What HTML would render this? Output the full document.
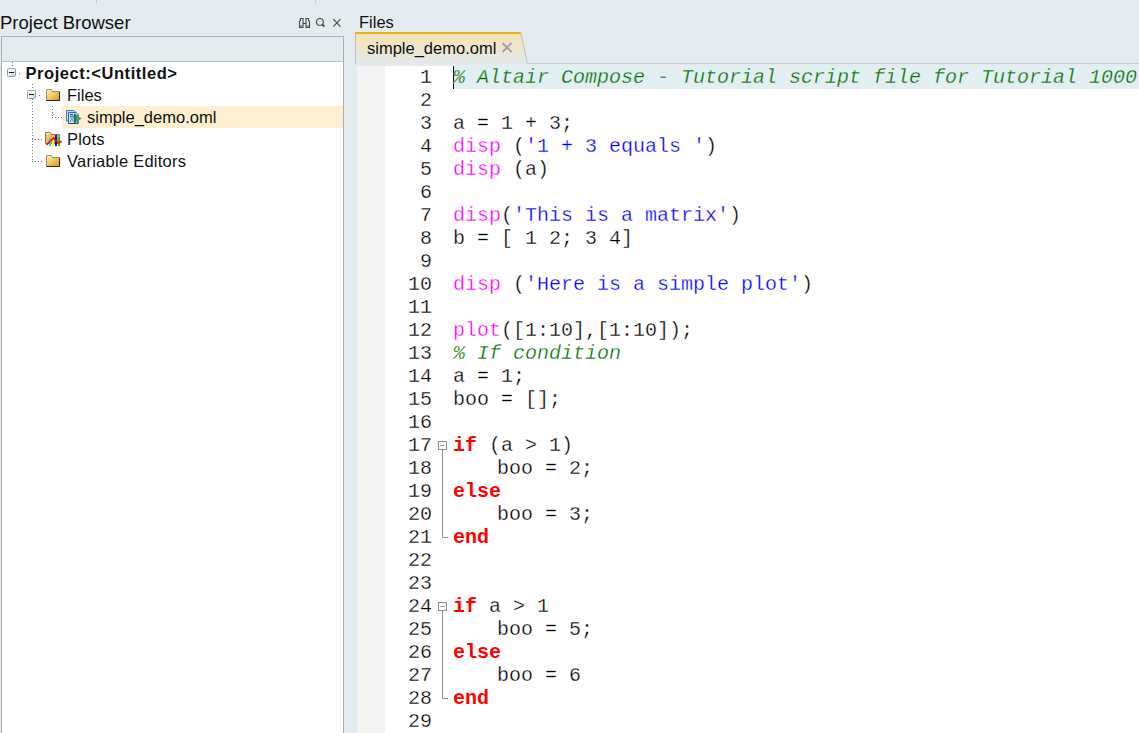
<!DOCTYPE html>
<html><head><meta charset="utf-8">
<style>
html,body{margin:0;padding:0;}
body{width:1139px;height:733px;overflow:hidden;position:relative;background:#e4ebee;font-family:"Liberation Sans",sans-serif;color:#000;}
.abs{position:absolute;}
.sep{position:absolute;top:0;width:1px;height:3px;background:#c4c9cd;}
#pbtitle{left:0;top:11px;font-size:18.5px;line-height:24px;color:#111;white-space:nowrap;}
#lp{left:1px;top:36px;width:341px;height:700px;border:1px solid #a9b0b5;background:#fff;}
#lphead{left:0;top:0;width:341px;height:24px;background:#e4ebee;border-bottom:1px solid #bcc2c6;}
.row{position:absolute;height:22px;line-height:22px;font-size:16.5px;white-space:nowrap;color:#111;}
#files{left:359px;top:10px;font-size:16.5px;line-height:24px;color:#111;}
#tab{left:355px;top:32px;width:174px;height:32px;}
#editor{left:357px;top:66px;width:782px;height:667px;background:#fff;}
#gutter{left:0;top:0;width:28px;height:667px;background:#f4f4f4;}
.code{position:absolute;left:0;top:0;font-family:"Liberation Mono",monospace;font-size:20px;line-height:23px;white-space:pre;color:#000;-webkit-text-stroke:0.3px #fff;}
.ln{position:absolute;left:0;width:75px;text-align:right;}
.cl{position:absolute;left:96px;}
.cm{color:#007000;font-style:italic;}
.kw{color:#ff00ff;}
.st{color:#0000ff;}
.rw{color:#ff0000;font-weight:bold;-webkit-text-stroke:0;}
</style></head>
<body>
<div class="sep" style="left:96px"></div>
<div class="sep" style="left:315px"></div>
<div id="pbtitle" class="abs">Project Browser</div>
<!-- header icons -->
<svg class="abs" style="left:298px;top:17px" width="46" height="12" viewBox="0 0 46 12">
  <g fill="none" stroke="#4a4a4a" stroke-width="1.1">
    <path d="M1.5 10.5V4.5l1-1V1.5h2.5v2.5l0 6.5z"/>
    <path d="M11.5 10.5V4.5l-1-1V1.5H8v2.5v6.5z"/>
    <path d="M5 6.5h3"/>
    <path d="M2 9h2.5M8.5 9H11" stroke-width="0.9"/>
    <circle cx="21.9" cy="4.9" r="3.4"/><path d="M24.3 7.4l2.2 2.2" stroke-width="1.8"/>
    <path d="M35.3 2.2l7.2 7.5M42.5 2.2l-7.2 7.5" stroke-width="1.2"/>
  </g>
</svg>
<div id="lp" class="abs">
  <div id="lphead" class="abs"></div>
</div>
<div id="tree">
<style>
.dv{position:absolute;width:1px;background:repeating-linear-gradient(to bottom,#767676 0,#767676 1px,transparent 1px,transparent 3px);}
.dh{position:absolute;height:1px;background:repeating-linear-gradient(to right,#767676 0,#767676 1px,transparent 1px,transparent 3px);}
.exp{position:absolute;width:7px;height:7px;border:1px solid #8c9db0;border-radius:1.5px;background:linear-gradient(135deg,#ffffff 0%,#eef2f8 50%,#c5d0de 100%);}
.exp:after{content:"";position:absolute;left:1px;top:3px;width:5px;height:1px;background:#111;}
</style>
<div class="abs" style="left:62px;top:106px;width:281px;height:22px;background:#fdefcf"></div>
<div class="dv" style="left:12px;top:62px;height:6px"></div>
<div class="dh" style="left:19px;top:73px;width:1px"></div>
<div class="dv" style="left:32px;top:84px;height:78px"></div>
<div class="dh" style="left:39px;top:95px;width:1px"></div>
<div class="dv" style="left:52px;top:106px;height:12px"></div>
<div class="dh" style="left:52px;top:117px;width:10px"></div>
<div class="dh" style="left:32px;top:139px;width:11px"></div>
<div class="dh" style="left:32px;top:161px;width:11px"></div>
<div class="exp" style="left:7px;top:68px"></div>
<div class="exp" style="left:27px;top:90px"></div>
<svg class="abs" style="left:45px;top:88px" width="16" height="14" viewBox="0 0 16 14">
 <defs><linearGradient id="fg" x1="0" y1="0" x2="1" y2="1"><stop offset="0" stop-color="#fff0b0"/><stop offset="0.5" stop-color="#f3c85a"/><stop offset="1" stop-color="#d98f22"/></linearGradient></defs>
 <path d="M1.5 12.5V1.5h5l1 2h7v9z" fill="url(#fg)" stroke="#9a8a6c" stroke-width="1"/>
 <path d="M2 2.5h4" stroke="#fff3c8" stroke-width="1"/>
 <path d="M1.5 12.5h13V4" fill="none" stroke="#2e2416" stroke-width="1"/>
</svg>
<svg class="abs" style="left:65px;top:109px" width="17" height="16" viewBox="0 0 17 16">
 <defs><linearGradient id="ag" x1="0" y1="0" x2="1" y2="0"><stop offset="0" stop-color="#1f7a4a"/><stop offset="0.45" stop-color="#5fb890"/><stop offset="1" stop-color="#1d7046"/></linearGradient></defs>
 <path d="M1.5 1.5h7.5l2 2v8.5h-9.5z" fill="#b8dcf4" stroke="#3b7cc4" stroke-width="1"/>
 <path d="M3.5 3.5h7.5l2 2v9h-9.5z" fill="#c4e2f6" stroke="#2f6cb4" stroke-width="1"/>
 <path d="M3.5 14.5h9.5V6" fill="none" stroke="#1c4c8c" stroke-width="1"/>
 <rect x="5" y="5" width="3" height="1" fill="#555"/>
 <rect x="5" y="6.5" width="4" height="2" fill="#5a82f0"/>
 <path d="M5.5 9.5h3l-1.5 2z" fill="#20a060"/>
 <rect x="5" y="11.5" width="1" height="1" fill="#444"/><rect x="7.5" y="11.5" width="1" height="1" fill="#444"/>
 <path d="M9 4.5L16.5 9.5 9 14.5z" fill="url(#ag)"/>
 <rect x="9.5" y="5" width="1" height="9" fill="#12603a"/>
 <rect x="11.5" y="6" width="1" height="7" fill="#2a8a58"/>
</svg>
<svg class="abs" style="left:45px;top:131px" width="17" height="16" viewBox="0 0 17 16">
 <defs><linearGradient id="pg" x1="0" y1="0" x2="1" y2="1"><stop offset="0" stop-color="#f8dc8a"/><stop offset="0.5" stop-color="#e9b24a"/><stop offset="1" stop-color="#c98a2a"/></linearGradient></defs>
 <path d="M0.5 12.5V1.5h5l1 2h8v9z" fill="url(#pg)" stroke="#8a7456" stroke-width="1"/>
 <path d="M1 2.5h4.5" stroke="#fbefc8" stroke-width="1"/>
 <rect x="4" y="7" width="2" height="8" fill="#00e8f8"/>
 <rect x="7" y="5" width="2" height="10" fill="#f8f800"/>
 <rect x="10" y="4" width="2" height="11" fill="#0010ff"/>
 <rect x="13" y="6" width="2" height="9" fill="#00d800"/>
 <path d="M1.5 14l7-7 5 5.2 3-2.2" fill="none" stroke="#ff0000" stroke-width="1.6"/>
</svg>
<svg class="abs" style="left:45px;top:154px" width="16" height="14" viewBox="0 0 16 14">
 <path d="M1.5 12.5V1.5h5l1 2h7v9z" fill="url(#fg)" stroke="#9a8a6c" stroke-width="1"/>
 <path d="M2 2.5h4" stroke="#fff3c8" stroke-width="1"/>
 <path d="M1.5 12.5h13V4" fill="none" stroke="#2e2416" stroke-width="1"/>
</svg>
<div class="row" style="left:25.5px;top:62px;font-weight:bold;letter-spacing:0.55px">Project:&lt;Untitled&gt;</div>
<div class="row" style="left:67px;top:84px">Files</div>
<div class="row" style="left:87px;top:106px">simple_demo.oml</div>
<div class="row" style="left:67px;top:128px;letter-spacing:0.2px">Plots</div>
<div class="row" style="left:67px;top:150px;letter-spacing:0.25px">Variable Editors</div>
</div>
<div id="files" class="abs">Files</div>
<svg id="tab" class="abs" width="174" height="32" viewBox="0 0 174 32">
  <defs><linearGradient id="tg" x1="0" y1="0" x2="0" y2="1">
    <stop offset="0" stop-color="#f5e3b2"/><stop offset="0.75" stop-color="#e9e7dc"/><stop offset="1" stop-color="#e3e9eb"/></linearGradient></defs>
  <path d="M0.5 32V1.5H166L172.5 32" fill="url(#tg)" stroke="#b9bfc4" stroke-width="1"/>
  <rect x="0" y="0" width="166" height="2" fill="#e5b51f"/>
</svg>
<div class="abs" style="left:367px;top:36px;font-size:16.5px;line-height:24px;color:#111;white-space:nowrap">simple_demo.oml</div>
<svg class="abs" style="left:501px;top:42px" width="12" height="11" viewBox="0 0 12 11"><path d="M1.5 1l9 9M10.5 1l-9 9" stroke="#9aa0a6" stroke-width="1.8" fill="none"/></svg>
<div class="abs" style="left:527px;top:63px;width:612px;height:1px;background:#c9ced2"></div>
<div id="editor" class="abs">
  <div id="gutter" class="abs"></div>
  <div class="abs" style="left:97px;top:0;width:685px;height:23px;background:#e2eef2"></div>
  <svg class="abs" style="left:80px;top:368px" width="12" height="322" viewBox="0 0 12 322">
 <g fill="none" stroke="#8f8f8f" stroke-width="1">
  <rect x="1.5" y="7.5" width="8" height="8" fill="#fff"/>
  <path d="M3.5 11.5h4"/>
  <path d="M5.5 16v87.5H11"/>
  <rect x="1.5" y="168.5" width="8" height="8" fill="#fff"/>
  <path d="M3.5 172.5h4"/>
  <path d="M5.5 177v87.5H11"/>
 </g>
</svg>
<div class="abs" style="left:96px;top:0;width:1px;height:23px;background:#000"></div>
<div class="code" id="code">
<div class="ln" style="top:0px">1</div><div class="cl" style="top:0px;-webkit-text-stroke:0.3px #e2eef2"><span class="cm">% Altair Compose - Tutorial script file for Tutorial 1000</span></div>
<div class="ln" style="top:23px">2</div><div class="cl" style="top:23px"></div>
<div class="ln" style="top:46px">3</div><div class="cl" style="top:46px">a = 1 + 3;</div>
<div class="ln" style="top:69px">4</div><div class="cl" style="top:69px"><span class="kw">disp</span> (<span class="st">'1 + 3 equals '</span>)</div>
<div class="ln" style="top:92px">5</div><div class="cl" style="top:92px"><span class="kw">disp</span> (a)</div>
<div class="ln" style="top:115px">6</div><div class="cl" style="top:115px"></div>
<div class="ln" style="top:138px">7</div><div class="cl" style="top:138px"><span class="kw">disp</span>(<span class="st">'This is a matrix'</span>)</div>
<div class="ln" style="top:161px">8</div><div class="cl" style="top:161px">b = [ 1 2; 3 4]</div>
<div class="ln" style="top:184px">9</div><div class="cl" style="top:184px"></div>
<div class="ln" style="top:207px">10</div><div class="cl" style="top:207px"><span class="kw">disp</span> (<span class="st">'Here is a simple plot'</span>)</div>
<div class="ln" style="top:230px">11</div><div class="cl" style="top:230px"></div>
<div class="ln" style="top:253px">12</div><div class="cl" style="top:253px"><span class="kw">plot</span>([1:10],[1:10]);</div>
<div class="ln" style="top:276px">13</div><div class="cl" style="top:276px"><span class="cm">% If condition</span></div>
<div class="ln" style="top:299px">14</div><div class="cl" style="top:299px">a = 1;</div>
<div class="ln" style="top:322px">15</div><div class="cl" style="top:322px">boo = [];</div>
<div class="ln" style="top:345px">16</div><div class="cl" style="top:345px"></div>
<div class="ln" style="top:368px">17</div><div class="cl" style="top:368px"><span class="rw">if</span> (a &gt; 1)</div>
<div class="ln" style="top:391px">18</div><div class="cl" style="top:391px"><span style="margin-left:44px"></span>boo = 2;</div>
<div class="ln" style="top:414px">19</div><div class="cl" style="top:414px"><span class="rw">else</span></div>
<div class="ln" style="top:437px">20</div><div class="cl" style="top:437px"><span style="margin-left:44px"></span>boo = 3;</div>
<div class="ln" style="top:460px">21</div><div class="cl" style="top:460px"><span class="rw">end</span></div>
<div class="ln" style="top:483px">22</div><div class="cl" style="top:483px"></div>
<div class="ln" style="top:506px">23</div><div class="cl" style="top:506px"></div>
<div class="ln" style="top:529px">24</div><div class="cl" style="top:529px"><span class="rw">if</span> a &gt; 1</div>
<div class="ln" style="top:552px">25</div><div class="cl" style="top:552px"><span style="margin-left:44px"></span>boo = 5;</div>
<div class="ln" style="top:575px">26</div><div class="cl" style="top:575px"><span class="rw">else</span></div>
<div class="ln" style="top:598px">27</div><div class="cl" style="top:598px"><span style="margin-left:44px"></span>boo = 6</div>
<div class="ln" style="top:621px">28</div><div class="cl" style="top:621px"><span class="rw">end</span></div>
<div class="ln" style="top:644px">29</div><div class="cl" style="top:644px"></div>
</div>
</div>
</body></html>
